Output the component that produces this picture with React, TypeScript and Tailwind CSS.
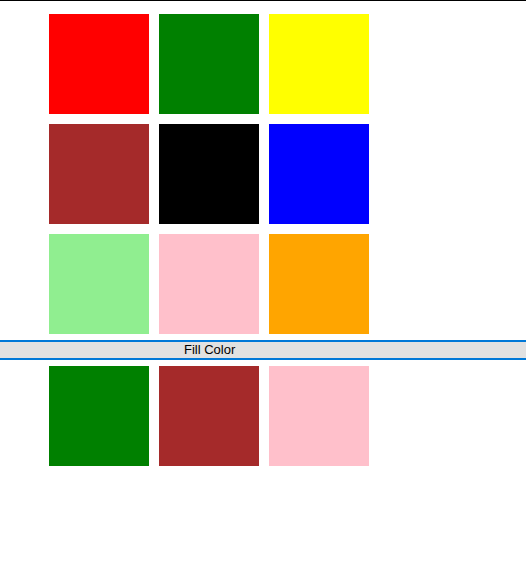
const palette = [
  "#ff0000",
  "#008000",
  "#ffff00",
  "#a52a2a",
  "#000000",
  "#0000ff",
  "#90ee90",
  "#ffc0cb",
  "#ffa500",
];

const picked = ["#008000", "#a52a2a", "#ffc0cb"];

function Swatch({ color }: { color: string }) {
  return <div className="w-[100px] h-[100px]" style={{ backgroundColor: color }} />;
}

export default function App() {
  return (
    <div className="w-[526px] h-[571px] bg-white border-t border-black overflow-hidden font-['Liberation_Sans',Arial,sans-serif]">
      <div className="grid grid-cols-[100px_100px_100px] gap-[10px] pl-[49px] pt-[13px]">
        {palette.map((c, i) => (
          <Swatch key={i} color={c} />
        ))}
      </div>
      <button className="mt-[6px] block w-full h-[20px] border-y-2 border-[#0078d7] bg-[#e1e1e1] text-left pl-[184px] text-[13px] leading-[16px] text-black">
        Fill Color
      </button>
      <div className="grid grid-cols-[100px_100px_100px] gap-[10px] pl-[49px] pt-[6px]">
        {picked.map((c, i) => (
          <Swatch key={i} color={c} />
        ))}
      </div>
    </div>
  );
}
